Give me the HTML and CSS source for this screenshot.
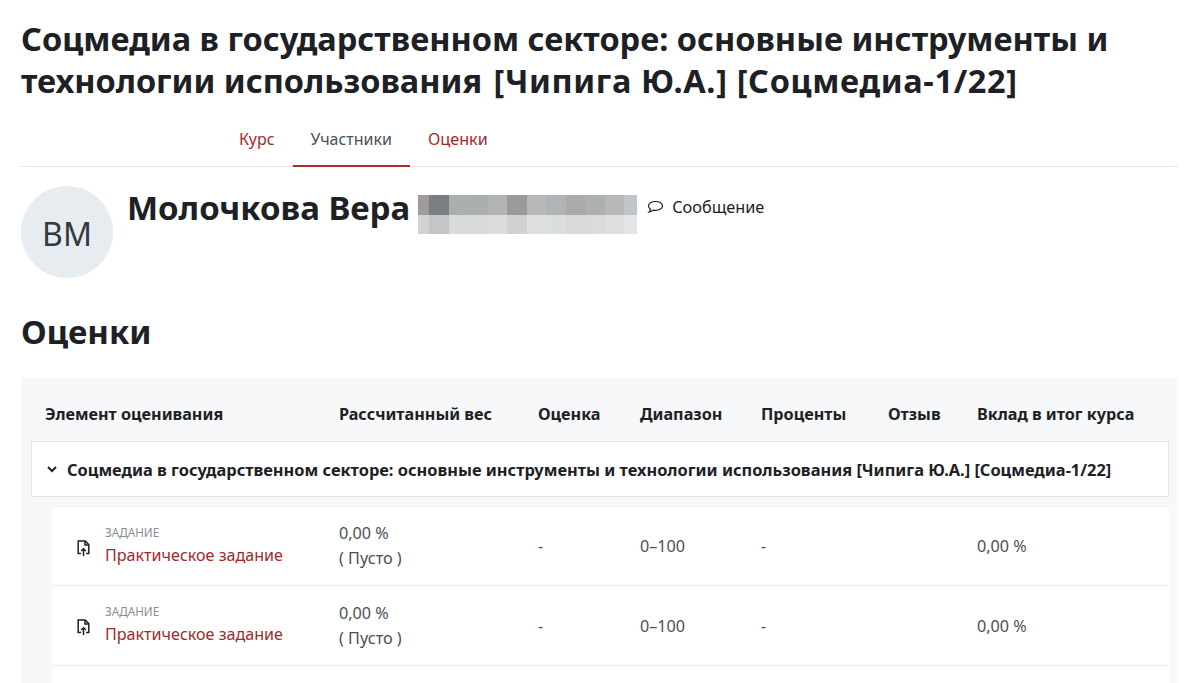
FILE: index.html
```html
<!DOCTYPE html>
<html lang="ru">
<head>
    <meta charset="UTF-8">
    <meta name="viewport" content="width=device-width, initial-scale=1.0">
    <title>Оценки</title>
    <link rel="stylesheet" href="styles.css">
</head>
<body>
    <h1 class="course-title">
        <span class="title-line">Соцмедиа в государственном секторе: основные инструменты и</span>
        <span class="title-line"><span>технологии использования</span> <span class="course-code">[Чипига Ю.А.] [Соцмедиа-1/22]</span></span>
    </h1>

    <nav class="tabs">
        <ul>
            <li><a href="#">Курс</a></li>
            <li><a href="#" class="active">Участники</a></li>
            <li><a href="#">Оценки</a></li>
        </ul>
    </nav>

    <div class="user-header">
        <div class="avatar">ВМ</div>
        <h2 class="user-name">Молочкова Вера</h2>
        <div class="mosaic">
            <div class="mosaic-row">
                <span class="c1"></span><span class="c2"></span><span class="c3"></span><span class="c4"></span><span class="c5"></span><span class="c6"></span><span class="c7"></span><span class="c8"></span><span class="c9"></span><span class="c10"></span><span class="c11"></span><span class="c12"></span>
            </div>
            <div class="mosaic-row light">
                <span class="c1"></span><span class="c2"></span><span class="c3"></span><span class="c4"></span><span class="c5"></span><span class="c6"></span><span class="c7"></span><span class="c8"></span><span class="c9"></span><span class="c10"></span><span class="c11"></span><span class="c12"></span>
            </div>
        </div>
        <a href="#" class="message-link">
            <svg width="17" height="14" viewBox="0 0 17 14" fill="none" stroke="#1d2125" stroke-width="1.2">
                <path d="M8.5 1.5c3.9 0 7 1.9 7 4.4s-3.1 4.4-7 4.4c-.8 0-1.5-.1-2.2-.2-1 .9-2.4 1.6-4.2 1.9.8-.8 1.3-1.7 1.5-2.8-1.3-.8-2.1-2-2.1-3.3 0-2.5 3.1-4.4 7-4.4z"/>
            </svg>
            Сообщение
        </a>
    </div>

    <h2 class="section-title">Оценки</h2>

    <div class="grades">
        <div class="grades-head">
            <div>Элемент оценивания</div>
            <div>Рассчитанный вес</div>
            <div>Оценка</div>
            <div>Диапазон</div>
            <div>Проценты</div>
            <div>Отзыв</div>
            <div>Вклад в итог курса</div>
        </div>

        <div class="category">
            <svg class="chevron" width="10" height="7" viewBox="0 0 10 7" fill="none" stroke="#1d2125" stroke-width="2">
                <path d="M1 1l4 4 4-4"/>
            </svg>
            Соцмедиа в государственном секторе: основные инструменты и технологии использования [Чипига Ю.А.] [Соцмедиа-1/22]
        </div>

        <div class="grade-row">
            <div class="item">
                <svg class="item-icon" width="13" height="17" viewBox="0 0 13 17" fill="none" stroke="#1d2125" stroke-width="1.5">
                    <path d="M4 13.5H1.2V1h7l3.6 3.6v8.9H9"/>
                    <path d="M8 1v4h3.8"/>
                    <path d="M6.5 16V9M4.2 11l2.3-2.3L8.8 11"/>
                </svg>
                <div>
                    <div class="item-type">Задание</div>
                    <a href="#" class="item-link">Практическое задание</a>
                </div>
            </div>
            <div class="weight">0,00 %<br>( Пусто )</div>
            <div>-</div>
            <div>0–100</div>
            <div>-</div>
            <div></div>
            <div>0,00 %</div>
        </div>

        <div class="grade-row">
            <div class="item">
                <svg class="item-icon" width="13" height="17" viewBox="0 0 13 17" fill="none" stroke="#1d2125" stroke-width="1.5">
                    <path d="M4 13.5H1.2V1h7l3.6 3.6v8.9H9"/>
                    <path d="M8 1v4h3.8"/>
                    <path d="M6.5 16V9M4.2 11l2.3-2.3L8.8 11"/>
                </svg>
                <div>
                    <div class="item-type">Задание</div>
                    <a href="#" class="item-link">Практическое задание</a>
                </div>
            </div>
            <div class="weight">0,00 %<br>( Пусто )</div>
            <div>-</div>
            <div>0–100</div>
            <div>-</div>
            <div></div>
            <div>0,00 %</div>
        </div>

        <div class="grade-row"></div>
    </div>
</body>
</html>
```

FILE: styles.css
```css
html, body {
    height: 683px;
    overflow: hidden;
}
body {
    margin: 0;
    padding: 0 22px 0 21px;
    font-family: "Noto Sans", Arial, sans-serif;
    font-size: 16px;
    color: #1d2125;
    background-color: #fff;
}
a {
    color: #9f2a2a;
    text-decoration: none;
}
.course-title {
    margin: 0;
    padding-top: 18px;
    font-size: 32.5px;
    line-height: 42px;
    font-weight: 700;
}
.title-line {
    display: block;
    white-space: nowrap;
}
.course-code {
    margin-left: 3px;
    letter-spacing: 0.65px;
}
.tabs {
    margin-top: 18px;
    border-bottom: 1px solid #dee2e6;
}
.tabs ul {
    list-style: none;
    display: flex;
    margin: 0;
    padding: 0 0 0 200px;
}
.tabs a {
    display: block;
    padding: 0 18px;
    height: 45px;
    line-height: 38px;
    font-size: 16px;
}
.tabs li:last-child a {
    font-size: 16.2px;
}
.tabs a.active {
    color: #495057;
    border-bottom: 2px solid #b02a2a;
    margin-bottom: -1px;
}
.user-header {
    display: flex;
    align-items: flex-start;
    margin-top: 19px;
    height: 92px;
}
.avatar {
    width: 92px;
    height: 92px;
    flex: none;
    border-radius: 50%;
    background-color: #e7ecf0;
    font-size: 32px;
    line-height: 96px;
    text-align: center;
    color: #32393f;
}
.user-name {
    margin: 0 0 0 14px;
    font-size: 33px;
    line-height: 44px;
    font-weight: 700;
}
.mosaic {
    width: 219px;
    margin: 9px 0 0 8px;
}
.mosaic-row {
    display: grid;
    grid-template-columns: 11px 20px 19px 20px 19px 20px 19px 20px 19px 20px 19px 13px;
    height: 19.5px;
}
.c1 { background-color: #a09a9b; }
.c2 { background-color: #797e81; }
.c3 { background-color: #aab0b0; }
.c4 { background-color: #a9aeaf; }
.c5 { background-color: #b3b3b3; }
.c6 { background-color: #9c9a98; }
.c7 { background-color: #b7b9b8; }
.c8 { background-color: #afb5b6; }
.c9 { background-color: #aaaaaa; }
.c10 { background-color: #acb0b1; }
.c11 { background-color: #b8b8b8; }
.c12 { background-color: #c0c5c9; }
.mosaic-row.light span { opacity: 0.45; }
.message-link {
    display: flex;
    align-items: center;
    gap: 8px;
    margin: 9px 0 0 10px;
    color: #1d2125;
    font-size: 16.3px;
    line-height: 24px;
}
.section-title {
    margin: 32px 0 0 0;
    font-size: 33px;
    line-height: 44px;
    font-weight: 700;
}
.grades {
    margin-top: 24px;
    padding: 0 9px 0 10px;
    background-color: #f7f8f9;
    height: 305px;
    overflow: hidden;
}
.grades-head {
    display: grid;
    grid-template-columns: 294px 199px 102px 121px 127px 89px 1fr;
    padding: 25px 0 0 14px;
    height: 63px;
    box-sizing: border-box;
    font-size: 16.2px;
    line-height: 22px;
    font-weight: 700;
}
.category {
    display: flex;
    align-items: center;
    height: 56px;
    box-sizing: border-box;
    padding-left: 15px;
    background-color: #fff;
    border: 1px solid #e3e6e9;
    font-size: 16.4px;
    font-weight: 700;
}
.chevron {
    margin-right: 10px;
}
.grade-row {
    display: grid;
    grid-template-columns: 287px 199px 102px 121px 127px 89px 1fr;
    align-items: center;
    height: 80px;
    margin-left: 21px;
    background-color: #fff;
    border-bottom: 1px solid #e9ecef;
    box-sizing: border-box;
    font-size: 16.2px;
    color: #495057;
}
.category + .grade-row {
    margin-top: 9px;
    border-top: 1px solid #eef0f2;
}
.item {
    display: flex;
    align-items: center;
    padding-left: 25px;
}
.item-icon {
    margin: 4px 15px 0 0;
    flex: none;
}
.item-type {
    font-size: 11.7px;
    line-height: 16px;
    text-transform: uppercase;
    color: #868e96;
}
.item-link {
    display: block;
    font-size: 16.1px;
    line-height: 28px;
    padding-top: 1px;
}
.weight {
    line-height: 25px;
}
```
